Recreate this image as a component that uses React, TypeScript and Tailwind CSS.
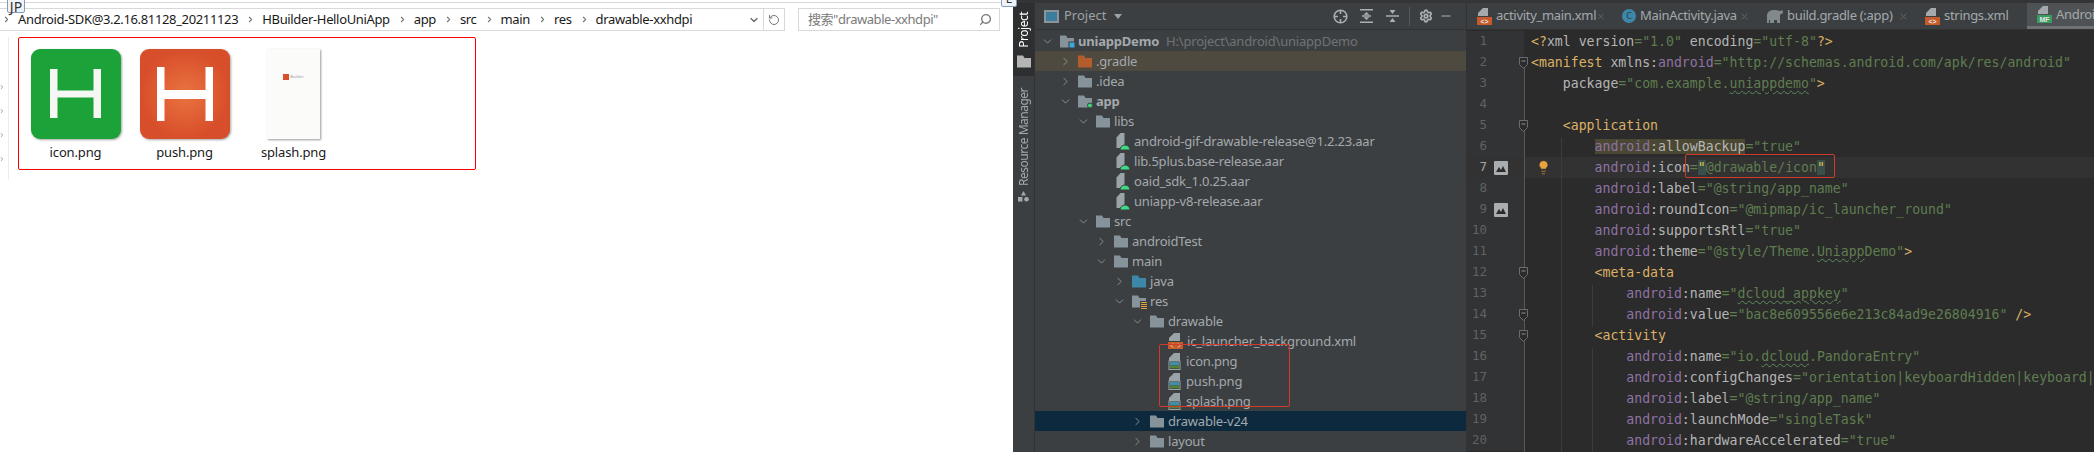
import type { ReactNode } from "react";
import { ChevronDown, ChevronRight, Search, RotateCw, X, Settings, Minus, Lightbulb } from "lucide-react";

// --- explorer side ---
const crumbs = [
  { name: "Android-SDK@3.2.16.81128_20211123" },
  { name: "HBuilder-HelloUniApp" },
  { name: "app" },
  { name: "src" },
  { name: "main" },
  { name: "res" },
  { name: "drawable-xxhdpi" },
];

function HLogo({ bg, inner }: { bg: string; inner?: boolean }) {
  const id = inner ? "pushGlow" : undefined;
  return (
    <svg width="90" height="90" viewBox="0 0 90 90" className="drop-shadow-[1px_1px_1px_rgba(0,0,0,0.35)]">
      {inner && (
        <defs>
          <radialGradient id="pushGlow" cx="50%" cy="50%" r="50%">
            <stop offset="0%" stopColor="#ea7340" />
            <stop offset="100%" stopColor="#d74e2a" />
          </radialGradient>
        </defs>
      )}
      <rect width="90" height="90" rx="9" fill={id ? `url(#${id})` : bg} />
      {inner ? (
        <path d="M17 18h7.500v23h41v-23h7.500v54h-7.500v-22h-41v22h-7.500z" fill="#fff" />
      ) : (
        <path d="M19 20h7.500v21.500h36v-21.500h7.500v49h-7.500v-20.500h-36v20.500h-7.500z" fill="#f4f7f4" />
      )}
    </svg>
  );
}

function SplashThumb() {
  return (
    <div className="w-[53px] h-[90px] bg-[#fbfbfa] shadow-[1px_1px_2px_rgba(0,0,0,0.4)] flex flex-col items-center pt-[25px]">
      <div className="flex items-center gap-[1px]">
        <div className="w-[6px] h-[6px] bg-[#d9502c]" />
        <span className="text-[4px] leading-none text-[#999]">Builder</span>
      </div>
    </div>
  );
}

function Explorer() {
  const files = [
    { name: "icon.png", thumb: <HLogo bg="#1ba238" /> },
    { name: "push.png", thumb: <HLogo bg="#d74e2a" inner /> },
    { name: "splash.png", thumb: <SplashThumb /> },
  ];
  return (
    <div className="w-[1013px] shrink-0 bg-white relative font-['Noto_Sans',sans-serif]">
      <div className="mt-[2px] h-px bg-[#d9d9d9] w-[1001px]" />
      <div className="flex mt-[5px] h-[23px] pr-[13px]">
        <div className="flex items-center w-[785px] border-y border-r border-[#d9d9d9] pl-[2px] text-[13px] text-[#1a1a1a]">
          {crumbs.map((c) => (
            <div key={c.name} className="flex items-center">
              <ChevronRight size={9} strokeWidth={3} className="text-[#777] mr-[7px]" />
              <span className="mr-[8px] tracking-[-0.35px] leading-none">{c.name}</span>
            </div>
          ))}
          <ChevronDown size={12} strokeWidth={2.5} className="text-[#666] ml-auto mr-[2px]" />
          <div className="w-px h-full bg-[#d9d9d9] ml-[1px]" />
          <RotateCw size={12} className="text-[#777] mx-[4px] -scale-x-100" />
        </div>
        <div className="ml-[13px] w-[202px] border border-[#d9d9d9] flex items-center pl-[9px] pr-[7px] text-[13px] text-[#7a7a7a] font-['Noto_Sans','Noto_Sans_CJK_SC',sans-serif]">
          <span className="tracking-[-0.45px]">搜索"drawable-xxhdpi"</span>
          <Search size={13} strokeWidth={2.5} className="ml-auto text-[#777] -scale-x-100" />
        </div>
      </div>

      <div className="flex mt-[6px]">
        <div className="w-[9px] h-[143px] border-r border-[#ececec] flex flex-col gap-[18px] pt-[47px]">
          {[0, 1, 2, 3].map((i) => (
            <ChevronRight key={i} size={6} strokeWidth={4} className="text-[#999] -ml-[1px]" />
          ))}
        </div>
        <div className="ml-[9px] w-[458px] h-[133px] border border-[#f00] rounded-[2px] flex pl-[2px] pt-[11px]">
          {files.map((f) => (
            <div key={f.name} className="w-[109px] flex flex-col items-center">
              {f.thumb}
              <span className="mt-[4px] text-[13px] leading-[18px] tracking-[-0.15px] text-[#1a1a1a]">{f.name}</span>
            </div>
          ))}
        </div>
      </div>

      <div className="absolute left-[7px] top-[-3px] w-[18px] h-[16px] bg-[#eef3fa] border border-[#8a9ab0] rounded-[2px] text-[14px] leading-[17px] text-center text-[#333]">
        JP
      </div>
      <div className="absolute left-[1001px] top-[-9px] w-[16px] h-[16px] bg-[#eef3fa] border border-[#8a9ab0] rounded-[2px] text-[12px] leading-[14px] text-center text-[#333] z-10">
        L
      </div>
    </div>
  );
}

// --- studio tree icons ---
function Folder({ color = "#87939a", badge }: { color?: string; badge?: "module" | "app" | "res" }) {
  return (
    <svg width="14" height="13" viewBox="0 0 14 13" className="shrink-0 overflow-visible">
      <path d="M0 0.500h6l1.500 2.500h6.500v9.500h-14z" fill={color} />
      {badge === "module" && <rect x="9" y="7" width="6" height="6" fill="#3aa8dc" stroke="#3c3f41" strokeWidth="1" />}
      {badge === "app" && <circle cx="12" cy="10.500" r="2.500" fill="#3fd17b" stroke="#3c3f41" strokeWidth="1" />}
      {badge === "res" && (
        <g stroke="#e0a23c" strokeWidth="1">
          <rect x="8" y="6" width="8" height="8" fill="#3c3f41" stroke="none" />
          <path d="M9 7.500h6M9 9.500h6M9 11.500h6M9 13.500h6" />
        </g>
      )}
    </svg>
  );
}

function DocBase() {
  return <path d="M6 0h6v8h-11v-3z" fill="#9aa3a8" />;
}

function AarIcon() {
  return (
    <svg width="14" height="17" viewBox="0 0 14 17" className="shrink-0 ml-[2px]">
      <path d="M4.500 0h4v15h-8v-10.500z" fill="#9aa3a8" />
      <path d="M4 17a5 5 0 0 1 10 0z" fill="#3ddc84" stroke="#3c3f41" strokeWidth="1" />
    </svg>
  );
}

function XmlIcon() {
  return (
    <svg width="15" height="16" viewBox="0 0 15 16" className="shrink-0">
      <DocBase />
      <rect x="0" y="9" width="15" height="7" fill="#c75b2a" />
      <path d="M5 10.500l-2 2 2 2M10 10.500l2 2-2 2" stroke="#e9d6c4" strokeWidth="1" fill="none" />
    </svg>
  );
}

function PngIcon() {
  return (
    <svg width="14" height="17" viewBox="0 0 14 17" className="shrink-0">
      <DocBase />
      <rect x="1" y="8" width="11" height="8.500" fill="#30393b" stroke="#9aa3a8" />
      <rect x="2" y="9" width="9" height="3.500" fill="#3f8fa8" />
      <rect x="2" y="12.500" width="9" height="3" fill="#55803a" />
    </svg>
  );
}

type Node = {
  label: string;
  level: number;
  open?: boolean;
  icon: ReactNode;
  bold?: boolean;
  hint?: string;
  rowClass?: string;
};

const tree: Node[] = [
  { label: "uniappDemo", level: 0, open: true, icon: <Folder badge="module" />, bold: true, hint: "H:\\project\\android\\uniappDemo" },
  { label: ".gradle", level: 1, open: false, icon: <Folder color="#b35c2c" />, rowClass: "bg-[#4f4a40]" },
  { label: ".idea", level: 1, open: false, icon: <Folder /> },
  { label: "app", level: 1, open: true, icon: <Folder badge="app" />, bold: true },
  { label: "libs", level: 2, open: true, icon: <Folder /> },
  { label: "android-gif-drawable-release@1.2.23.aar", level: 3, icon: <AarIcon /> },
  { label: "lib.5plus.base-release.aar", level: 3, icon: <AarIcon /> },
  { label: "oaid_sdk_1.0.25.aar", level: 3, icon: <AarIcon /> },
  { label: "uniapp-v8-release.aar", level: 3, icon: <AarIcon /> },
  { label: "src", level: 2, open: true, icon: <Folder /> },
  { label: "androidTest", level: 3, open: false, icon: <Folder /> },
  { label: "main", level: 3, open: true, icon: <Folder /> },
  { label: "java", level: 4, open: false, icon: <Folder color="#3d87a8" /> },
  { label: "res", level: 4, open: true, icon: <Folder badge="res" /> },
  { label: "drawable", level: 5, open: true, icon: <Folder /> },
  { label: "ic_launcher_background.xml", level: 6, icon: <XmlIcon /> },
  { label: "icon.png", level: 6, icon: <PngIcon /> },
  { label: "push.png", level: 6, icon: <PngIcon /> },
  { label: "splash.png", level: 6, icon: <PngIcon /> },
  { label: "drawable-v24", level: 5, open: false, icon: <Folder />, rowClass: "bg-[#0d293e]" },
  { label: "layout", level: 5, open: false, icon: <Folder /> },
];

function TreeRow({ node }: { node: Node }) {
  return (
    <div
      className={`h-[20px] flex items-center text-[13px] tracking-[-0.2px] text-[#a3a9ad] whitespace-nowrap ${node.rowClass ?? ""}`}
      style={{ paddingLeft: 5 + node.level * 18 }}
    >
      <div className="w-[14px] mr-[6px] shrink-0 flex justify-center text-[#9a9fa3]">
        {node.open === true && <ChevronDown size={13} strokeWidth={1.5} />}
        {node.open === false && <ChevronRight size={13} strokeWidth={1.5} />}
      </div>
      {node.icon}
      <span className={`ml-[4px] leading-none ${node.bold ? "font-bold" : ""}`}>{node.label}</span>
      {node.hint && <span className="ml-[7px] leading-none text-[#6f7376]">{node.hint}</span>}
    </div>
  );
}

function ProjectPanel() {
  return (
    <div className="w-[432px] shrink-0 bg-[#3c3f41] relative border-r border-[#323232]">
      <div className="h-[27px] border-b border-[#323232] flex items-center pl-[9px] text-[13px] text-[#9ea3a6]">
        <div className="w-[15px] h-[13px] bg-[#3a7d9c] border-2 border-[#8b9499]" />
        <span className="ml-[5px]">Project</span>
        <div className="ml-[8px] w-0 h-0 border-x-[4px] border-x-transparent border-t-[5px] border-t-[#9ea3a6]" />
        <div className="ml-auto flex items-center text-[#a9afb3]">
          <svg width="15" height="15" viewBox="0 0 15 15" fill="none" stroke="currentColor" strokeWidth="1.600">
            <circle cx="7.500" cy="7.500" r="6.300" />
            <path d="M7.500 1v4M7.500 10v4M1 7.500h4M10 7.500h4" />
          </svg>
          <svg width="13" height="14" viewBox="0 0 13 14" className="ml-[12px]" fill="currentColor">
            <path d="M0 0h13v1.500h-13zM0 12.500h13v1.500h-13zM6.500 3l3 2.800h-6zM6.500 11l-3-2.800h6zM2 6.300h9v1.400h-9z" />
          </svg>
          <svg width="13" height="14" viewBox="0 0 13 14" className="ml-[13px]" fill="currentColor">
            <path d="M0 6.300h13v1.500h-13zM6.500 5l-3-4h6zM6.500 9l3 4h-6z" />
          </svg>
          <div className="w-px h-[19px] bg-[#515658] ml-[10px]" />
          <Settings size={14} strokeWidth={3} className="ml-[9px]" />
          <Minus size={14} strokeWidth={2} className="ml-[6px] mr-[13px]" />
        </div>
      </div>
      <div className="mt-px">
        {tree.map((n) => (
          <TreeRow key={n.label} node={n} />
        ))}
      </div>
      <div className="absolute left-[124px] top-[341px] w-[131px] h-[63px] border border-[#d23a2c] rounded-[2px]" />
    </div>
  );
}

function SideStrip() {
  return (
    <div className="w-[22px] shrink-0 bg-[#3c3f41] border-r border-[#323232] text-[12px] tracking-[-0.5px] font-['Noto_Sans',sans-serif]">
      <div className="h-[73px] bg-[#2d2f30] flex flex-col items-center pt-[9px] text-white">
        <span className="[writing-mode:vertical-rl] rotate-180 leading-none">Project</span>
        <div className="mt-[7px]">
          <Folder color="#b5b5b5" />
        </div>
      </div>
      <div className="flex flex-col items-center pt-[12px] text-[#a3a9ad]">
        <span className="[writing-mode:vertical-rl] rotate-180 leading-none whitespace-nowrap">Resource Manager</span>
        <svg width="11" height="11" viewBox="0 0 11 11" fill="#a3a9ad" className="mt-[5px]">
          <path d="M5.500 0l2.500 4.500h-5z" />
          <rect x="0" y="6" width="4.500" height="4.500" />
          <circle cx="8.500" cy="8.200" r="2.300" />
        </svg>
      </div>
    </div>
  );
}

// --- tabs ---
function TabBadge({ color, label }: { color: string; label: string }) {
  return (
    <svg width="15" height="17" viewBox="0 0 15 17" className="shrink-0">
      <path d="M6 0h5v8h-10v-3z" fill="#a3a9ad" />
      <rect y="9" width="15" height="8" fill={color} />
      <text x="7.500" y="15.500" textAnchor="middle" fontSize="7" fontWeight="700" fill="#e6e6e6" fontFamily="Liberation Sans">
        {label}
      </text>
    </svg>
  );
}

const tabs: { name: string; icon: ReactNode; w: string }[] = [
  { name: "activity_main.xml", icon: <TabBadge color="#c75b2a" label="<>" />, w: "w-[145px]" },
  {
    name: "MainActivity.java",
    icon: (
      <div className="w-[14px] h-[14px] rounded-full bg-[#3d87a8] text-[9px] leading-[14px] text-center text-[#2b3a42] shrink-0">C</div>
    ),
    w: "w-[144px]",
  },
  {
    name: "build.gradle (:app)",
    icon: (
      <svg width="17" height="14" viewBox="0 0 17 14" fill="#82898d" className="shrink-0">
        <path d="M1 14v-7c0-4 3-6 7-6s5 1 6 1 2-1 2-1 1 1 1 2-1 2-2 2-1 1-1 2v7h-3v-3h-3v3h-4v-3h-1v3z" />
      </svg>
    ),
    w: "w-[159px]",
  },
  { name: "strings.xml", icon: <TabBadge color="#c75b2a" label="<>" />, w: "w-[102px]" },
];

function TabBar() {
  return (
    <div className="h-[27px] bg-[#3c3f41] border-b border-[#323232] flex text-[13px] text-[#a3a9ad] overflow-hidden font-['Noto_Sans',sans-serif]">
      <div className="w-[10px] shrink-0" />
      {tabs.map((t) => (
        <div key={t.name} className={`${t.w} shrink-0 flex items-center`}>
          {t.icon}
          <span className="ml-[4px] whitespace-nowrap tracking-[-0.3px]">{t.name}</span>
          <X size={11} className="ml-auto mr-[16px] text-[#66696b]" />
        </div>
      ))}
      <div className="flex-1 bg-[#4e5254] border-b-[3px] border-[#6e7274] flex items-center pl-[10px]">
        <TabBadge color="#3a9c5f" label="MF" />
        <span className="ml-[4px] whitespace-nowrap tracking-[-0.3px]">AndroidManifest.xml</span>
      </div>
    </div>
  );
}

// --- code ---
const Tag = ({ children }: { children: ReactNode }) => <span className="text-[#dcb165]">{children}</span>;
const Str = ({ children }: { children: ReactNode }) => <span className="text-[#5f7d50]">{children}</span>;
const Typo = ({ children }: { children: ReactNode }) => (
  <span className="underline decoration-wavy decoration-1 decoration-[#5f8a5f] underline-offset-2">{children}</span>
);
const Attr = ({ name }: { name: string }) => (
  <>
    <span className="text-[#8f72a3]">android</span>
    <span className="text-[#b5b5b5]">:{name}</span>
    <Str>=</Str>
  </>
);

type Line = { indent: number; code?: ReactNode; fold?: boolean; gutterIcon?: boolean; current?: boolean };

const lines: Line[] = [
  {
    indent: 0,
    code: (
      <>
        <Tag>&lt;?</Tag>
        <span className="text-[#b5b5b5]">xml version</span>
        <Str>="1.0"</Str>
        <span className="text-[#b5b5b5]"> encoding</span>
        <Str>="utf-8"</Str>
        <Tag>?&gt;</Tag>
      </>
    ),
  },
  {
    indent: 0,
    fold: true,
    code: (
      <>
        <Tag>&lt;manifest</Tag>
        <span className="text-[#b5b5b5]"> xmlns:</span>
        <span className="text-[#8f72a3]">android</span>
        <Str>="http://schemas.android.com/apk/res/android"</Str>
      </>
    ),
  },
  {
    indent: 4,
    code: (
      <>
        <span className="text-[#b5b5b5]">package</span>
        <Str>
          ="com.example.<Typo>uniappdemo</Typo>"
        </Str>
        <Tag>&gt;</Tag>
      </>
    ),
  },
  { indent: 0 },
  { indent: 4, fold: true, code: <Tag>&lt;application</Tag> },
  {
    indent: 8,
    code: (
      <>
        <span className="bg-[#4a4833]">
          <span className="text-[#8f72a3]">android</span>
          <span className="text-[#b5b5b5]">:allowBackup</span>
        </span>
        <Str>="true"</Str>
      </>
    ),
  },
  {
    indent: 8,
    gutterIcon: true,
    current: true,
    code: (
      <>
        <Attr name="icon" />
        <span className="bg-[#3a4f49] text-[#d9c34f]">"</span>
        <Str>@drawable/icon</Str>
        <span className="bg-[#3a4f49] text-[#d9c34f]">"</span>
      </>
    ),
  },
  {
    indent: 8,
    code: (
      <>
        <Attr name="label" />
        <Str>"@string/app_name"</Str>
      </>
    ),
  },
  {
    indent: 8,
    gutterIcon: true,
    code: (
      <>
        <Attr name="roundIcon" />
        <Str>"@mipmap/ic_launcher_round"</Str>
      </>
    ),
  },
  {
    indent: 8,
    code: (
      <>
        <Attr name="supportsRtl" />
        <Str>"true"</Str>
      </>
    ),
  },
  {
    indent: 8,
    code: (
      <>
        <Attr name="theme" />
        <Str>
          "@style/Theme.<Typo>Uniapp</Typo>Demo"
        </Str>
        <Tag>&gt;</Tag>
      </>
    ),
  },
  { indent: 8, fold: true, code: <Tag>&lt;meta-data</Tag> },
  {
    indent: 12,
    code: (
      <>
        <Attr name="name" />
        <Str>
          "<Typo>dcloud_appkey</Typo>"
        </Str>
      </>
    ),
  },
  {
    indent: 12,
    fold: true,
    code: (
      <>
        <Attr name="value" />
        <Str>"bac8e609556e6e213c84ad9e26804916"</Str>
        <Tag> /&gt;</Tag>
      </>
    ),
  },
  { indent: 8, fold: true, code: <Tag>&lt;activity</Tag> },
  {
    indent: 12,
    code: (
      <>
        <Attr name="name" />
        <Str>
          "io.<Typo>dcloud</Typo>.PandoraEntry"
        </Str>
      </>
    ),
  },
  {
    indent: 12,
    code: (
      <>
        <Attr name="configChanges" />
        <Str>"orientation|keyboardHidden|keyboard|screenSize"</Str>
      </>
    ),
  },
  {
    indent: 12,
    code: (
      <>
        <Attr name="label" />
        <Str>"@string/app_name"</Str>
      </>
    ),
  },
  {
    indent: 12,
    code: (
      <>
        <Attr name="launchMode" />
        <Str>"singleTask"</Str>
      </>
    ),
  },
  {
    indent: 12,
    code: (
      <>
        <Attr name="hardwareAccelerated" />
        <Str>"true"</Str>
      </>
    ),
  },
];

function Editor() {
  return (
    <div className="flex-1 min-w-0 flex flex-col bg-[#2b2b2b] overflow-hidden relative">
      <TabBar />
      <div className="font-['DejaVu_Sans_Mono',monospace] text-[13.2px] pt-px">
        {lines.map((l, i) => (
          <div key={i} className={`h-[21px] flex items-center whitespace-pre ${l.current ? "bg-[#323232]" : ""}`}>
            <div className={`w-[57px] h-full shrink-0 flex items-center relative ${l.current ? "bg-[#323232]" : "bg-[#313335]"}`}>
              <span className={`w-[20px] text-right text-[12.5px] ${l.current ? "text-[#a4a3a3]" : "text-[#5f6366]"}`}>{i + 1}</span>
              {l.gutterIcon && (
                <svg width="14" height="14" viewBox="0 0 14 14" className="ml-[7px]">
                  <rect width="14" height="14" rx="1" fill="#a9adb0" />
                  <path d="M2 11l3-5 2 3 2-4 3 6z" fill="#2b2b2b" />
                </svg>
              )}
              {l.fold && (
                <svg width="9" height="12" viewBox="0 0 9 12" className="absolute right-[-4px] top-[5px] z-10">
                  <path d="M0.500 0.500h8v7l-4 4-4-4z" fill="#2b2b2b" stroke="#6a6d70" />
                  <path d="M2.500 4h4" stroke="#8a8d90" />
                </svg>
              )}
            </div>
            <div className="pl-[7px]">
              {" ".repeat(l.indent)}
              {l.code}
            </div>
          </div>
        ))}
      </div>

      {/* guides, on top of the code */}
      <div className="absolute left-[57px] top-[64px] bottom-0 w-px bg-[#55585a]" />
      <div className="absolute left-[94px] top-[135px] bottom-0 w-px bg-[#3c3c3c]" />
      <div className="absolute left-[125px] top-[282px] h-[42px] w-px bg-[#3c3c3c]" />
      <div className="absolute left-[125px] top-[345px] bottom-0 w-px bg-[#3c3c3c]" />
      <Lightbulb size={15} fill="#e8a33d" strokeWidth={1} className="absolute left-[69px] top-[157px] text-[#e8a33d]" />
      <div className="absolute left-[218px] top-[151px] w-[150px] h-[24px] border border-[#d23a2c] rounded-[2px]" />
    </div>
  );
}

export default function App() {
  return (
    <div className="w-[2094px] h-[452px] flex overflow-hidden bg-white">
      <Explorer />
      <div className="flex-1 min-w-0 flex flex-col bg-[#3c3f41] overflow-hidden">
        <div className="h-[3px] bg-[#333536] shrink-0" />
        <div className="flex flex-1 min-h-0 font-['Noto_Sans',sans-serif]">
          <SideStrip />
          <ProjectPanel />
          <Editor />
        </div>
      </div>
    </div>
  );
}
